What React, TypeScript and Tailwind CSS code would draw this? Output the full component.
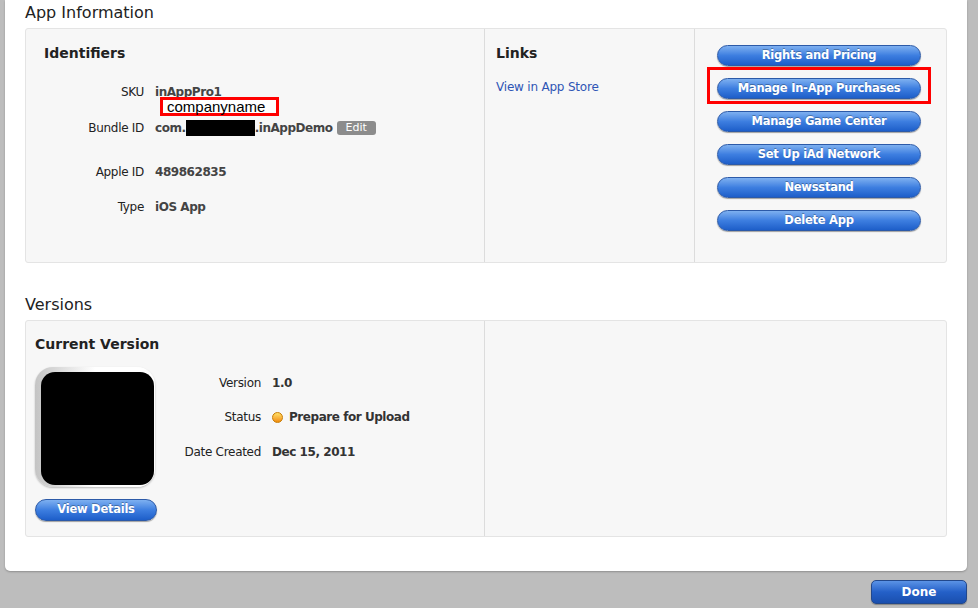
import React from "react";

const font = { fontFamily: '"DejaVu Sans", "Liberation Sans", sans-serif' };

function BlueButton({ label, w = "w-[204px]", h = "h-[21px]" }: { label: string; w?: string; h?: string }) {
  return (
    <div
      className={`${w} ${h} flex items-center justify-center rounded-full border border-[#2c5aa8] bg-gradient-to-b from-[#7eb0f0] via-[#3d7ee0] to-[#1d5ec9] text-white text-[11.5px] tracking-[-0.25px] font-bold shadow-[0_1px_1px_rgba(0,0,0,0.35)] [text-shadow:0_-1px_0_rgba(0,0,0,0.3)]`}
    >
      {label}
    </div>
  );
}

function Row({ label, children, mt, labelW }: { label: string; children: React.ReactNode; mt: string; labelW: string }) {
  return (
    <div className={`flex items-center h-[18px] ${mt}`}>
      <div className={`${labelW} text-right text-[12px] tracking-[-0.3px] text-[#222]`}>{label}</div>
      <div className="ml-[11px] flex items-center text-[12px] tracking-[-0.45px] font-bold text-[#333]">{children}</div>
    </div>
  );
}

export default function App() {
  return (
    <div className="relative w-[978px] h-[608px] bg-[#bdbdbd] overflow-hidden" style={font}>
      <div className="ml-[5px] w-[962px] h-[571px] bg-white rounded-b-[5px] shadow-[0_1px_2px_rgba(0,0,0,0.25)] pl-[20px] flex flex-col">
        <div className="h-[28px] pt-[1px] text-[16px] leading-[24px] text-[#222]">App Information</div>
        <div className="w-[922px] h-[235px] flex bg-[#f7f7f7] border border-[#e4e4e4] rounded-[3px]">
          <div className="w-[459px] border-r border-[#dcdcdc] pt-[15px] pl-[18px]">
            <div className="text-[14px] leading-[18px] font-bold text-[#222]">Identifiers</div>
            <Row label="SKU" mt="mt-[21px]" labelW="w-[100px]">
              <span className="text-[#444]">inAppPro1</span>
            </Row>
            <Row label="Bundle ID" mt="mt-[18px]" labelW="w-[100px]">
              <span className="text-[#444]">com.</span>
              <span className="inline-block w-[69px] h-[16px] bg-black" />
              <span className="text-[#444]">.inAppDemo</span>
              <span className="ml-[4px] w-[39px] h-[14px] rounded-[3px] bg-[#8c8c8c] text-white text-[11px] tracking-normal font-normal flex items-center justify-center">Edit</span>
            </Row>
            <Row label="Apple ID" mt="mt-[26px]" labelW="w-[100px]">
              <span className="text-[#444]">489862835</span>
            </Row>
            <Row label="Type" mt="mt-[17px]" labelW="w-[100px]">
              <span className="text-[#444]">iOS App</span>
            </Row>
          </div>
          <div className="w-[210px] border-r border-[#dcdcdc] pt-[15px] pl-[11px]">
            <div className="text-[14px] leading-[18px] font-bold text-[#222]">Links</div>
            <div className="mt-[16px] text-[12px] tracking-[-0.2px] text-[#2f55b5]">View in App Store</div>
          </div>
          <div className="flex-1 pt-[16px] pl-[22px] flex flex-col gap-[12px]">
            <BlueButton label="Rights and Pricing" />
            <BlueButton label="Manage In-App Purchases" />
            <BlueButton label="Manage Game Center" />
            <BlueButton label="Set Up iAd Network" />
            <BlueButton label="Newsstand" />
            <BlueButton label="Delete App" />
          </div>
        </div>
        <div className="h-[57px] pt-[30px] text-[16px] leading-[24px] text-[#222]">Versions</div>
        <div className="w-[922px] h-[217px] flex bg-[#f7f7f7] border border-[#e4e4e4] rounded-[3px]">
          <div className="w-[459px] border-r border-[#dcdcdc] pt-[14px] pl-[9px]">
            <div className="text-[14px] leading-[18px] font-bold text-[#222]">Current Version</div>
            <div className="flex">
              <div className="flex flex-col">
                <div className="mt-[14px] w-[120px] h-[120px] rounded-[18px] bg-gradient-to-r from-[#c4c4c4] via-white to-white pt-[5px] pl-[6px] pr-[1px] pb-[2px] shadow-[0_1px_2px_rgba(0,0,0,0.25)]">
                  <div className="w-full h-full bg-black rounded-[14px]" />
                </div>
                <div className="mt-[12px]">
                  <BlueButton label="View Details" w="w-[122px]" h="h-[22px]" />
                </div>
              </div>
              <div className="pt-[21px]">
                <Row label="Version" mt="mt-[0px]" labelW="w-[104px]">
                  <span>1.0</span>
                </Row>
                <Row label="Status" mt="mt-[16px]" labelW="w-[104px]">
                  <span className="inline-block w-[11px] h-[11px] rounded-full bg-gradient-to-b from-[#ffe066] to-[#f08c00] border border-[#c87a00] mr-[6px]" />
                  <span>Prepare for Upload</span>
                </Row>
                <Row label="Date Created" mt="mt-[17px]" labelW="w-[104px]">
                  <span>Dec 15, 2011</span>
                </Row>
              </div>
            </div>
          </div>
          <div className="flex-1" />
        </div>
      </div>
      <div className="flex justify-end pr-[11px] mt-[9px]">
        <div className="w-[96px] h-[24px] flex items-center justify-center rounded-[5px] border border-[#22488c] bg-gradient-to-b from-[#5b93e6] via-[#2460c8] to-[#1a4fae] text-white text-[12px] font-bold shadow-[0_1px_1px_rgba(0,0,0,0.3)]">
          Done
        </div>
      </div>

      {/* annotation overlays */}
      <div className="absolute left-[160px] top-[97px] w-[119px] h-[19px] border-[3px] border-[#ff0000] bg-white flex items-center pl-[4px] text-[15px] leading-none text-black" style={{ fontFamily: '"Liberation Sans", Arial, sans-serif' }}>
        companyname
      </div>
      <div className="absolute left-[707px] top-[67px] w-[224px] h-[37px] border-[3px] border-[#ff0000]" />
    </div>
  );
}
